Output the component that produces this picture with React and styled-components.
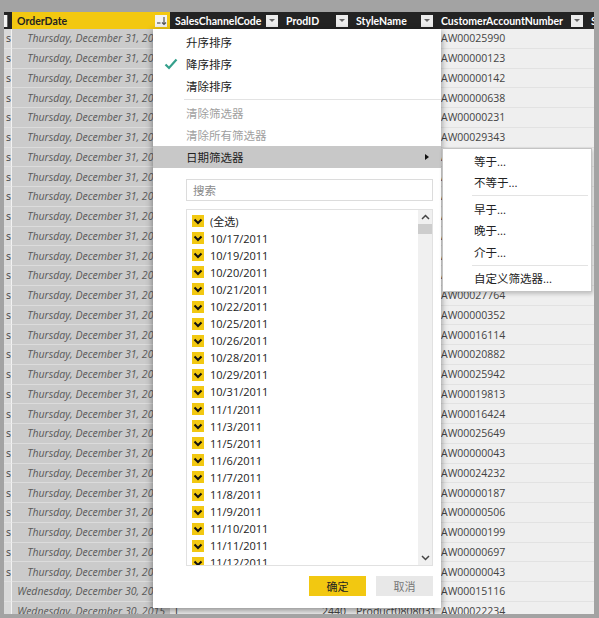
import React from "react";
import styled, { createGlobalStyle } from "styled-components";

const GlobalStyle = createGlobalStyle`
  html, body {
    margin: 0;
    padding: 0;
    background: #a3a3a3;
  }
  body {
    font-family: "Open Sans", "Noto Sans CJK SC", sans-serif;
  }
`;

const COLUMNS = "8px 158px 111px 70px 85px 150px 8px";

const accounts = [
  "AW00025990", "AW00000123", "AW00000142", "AW00000638", "AW00000231",
  "AW00029343", "AW00011982", "AW00000298", "AW00018470", "AW00000562",
  "AW00027014", "AW00000078", "AW00013655", "AW00027764", "AW00000352",
  "AW00016114", "AW00020882", "AW00025942", "AW00019813", "AW00016424",
  "AW00025649", "AW00000043", "AW00024232", "AW00000187", "AW00000506",
  "AW00000199", "AW00000697", "AW00000043", "AW00015116", "AW00022234",
];

const dates = [
  "(全选)", "10/17/2011", "10/19/2011", "10/20/2011", "10/21/2011", "10/22/2011",
  "10/25/2011", "10/26/2011", "10/28/2011", "10/29/2011", "10/31/2011",
  "11/1/2011", "11/3/2011", "11/5/2011", "11/6/2011", "11/7/2011", "11/8/2011",
  "11/9/2011", "11/10/2011", "11/11/2011", "11/12/2011",
];

export default function App() {
  return (
    <>
      <GlobalStyle />
      <Frame>
        <Sheet>
          <HeaderRow>
            <HeadCell>
              <EdgeBox />
            </HeadCell>
            <HeadCell $selected>
              OrderDate
              <DropBtn $light>
                <svg width="11" height="11" viewBox="0 0 11 11">
                  <path d="M1 8 H4.5" stroke="#555" strokeWidth="1.2" />
                  <path d="M8 2 V9.5 M6 7.5 L8 9.5 L10 7.5" stroke="#555" strokeWidth="1.2" fill="none" />
                </svg>
              </DropBtn>
            </HeadCell>
            <HeadCell>
              SalesChannelCode
              <DropBtn><Tri /></DropBtn>
            </HeadCell>
            <HeadCell>
              ProdID
              <DropBtn><Tri /></DropBtn>
            </HeadCell>
            <HeadCell>
              StyleName
              <DropBtn><Tri /></DropBtn>
            </HeadCell>
            <HeadCell>
              CustomerAccountNumber
              <DropBtn><Tri /></DropBtn>
            </HeadCell>
            <HeadCell>S</HeadCell>
          </HeaderRow>

          {accounts.map((acct, i) => {
            const wed = i >= 28;
            return (
              <DataRow key={i}>
                <Cell $edge>{wed ? "" : "s"}</Cell>
                <Cell $selected $align="right" $italic>
                  {wed ? "Wednesday, December 30, 2015" : "Thursday, December 31, 2015"}
                </Cell>
                <Cell>I</Cell>
                <Cell $align="right">2440</Cell>
                <Cell>Product0808031</Cell>
                <Cell>{acct}</Cell>
                <Cell />
              </DataRow>
            );
          })}

          <Panel>
            <MenuItem>
              <IconSlot />
              升序排序
            </MenuItem>
            <MenuItem>
              <IconSlot>
                <svg width="14" height="12" viewBox="0 0 14 12">
                  <path d="M1.5 6.5 L5 10 L12.5 1.5" stroke="#35a08c" strokeWidth="2.2" fill="none" />
                </svg>
              </IconSlot>
              降序排序
            </MenuItem>
            <MenuItem>
              <IconSlot />
              清除排序
            </MenuItem>
            <Separator $indent={31} />
            <MenuItem $disabled>
              <IconSlot />
              清除筛选器
            </MenuItem>
            <MenuItem $disabled>
              <IconSlot />
              清除所有筛选器
            </MenuItem>
            <MenuItem $active>
              <IconSlot />
              日期筛选器
              <SubArrow />
            </MenuItem>

            <SearchBox>搜索</SearchBox>

            <ListBox>
              <ListItems>
                {dates.map((d) => (
                  <ListItem key={d}>
                    <CheckBox>
                      <svg width="12" height="12" viewBox="0 0 12 12">
                        <path d="M2.5 4.5 L6 8 L9.5 4.5" stroke="#111" strokeWidth="2" fill="none" />
                      </svg>
                    </CheckBox>
                    {d}
                  </ListItem>
                ))}
              </ListItems>
              <ScrollBar>
                <ScrollArrow>
                  <svg width="9" height="6" viewBox="0 0 9 6">
                    <path d="M1 5 L4.5 1.5 L8 5" stroke="#444" strokeWidth="1.5" fill="none" />
                  </svg>
                </ScrollArrow>
                <Thumb />
                <ScrollSpace />
                <ScrollArrow>
                  <svg width="9" height="6" viewBox="0 0 9 6">
                    <path d="M1 1 L4.5 4.5 L8 1" stroke="#444" strokeWidth="1.5" fill="none" />
                  </svg>
                </ScrollArrow>
              </ScrollBar>
            </ListBox>

            <ButtonRow>
              <Button $primary>确定</Button>
              <Button>取消</Button>
            </ButtonRow>
          </Panel>

          <SubMenu>
            <SubItem>等于...</SubItem>
            <SubItem>不等于...</SubItem>
            <Separator $indent={29} $right={3} />
            <SubItem>早于...</SubItem>
            <SubItem>晚于...</SubItem>
            <SubItem>介于...</SubItem>
            <Separator $indent={29} $right={3} />
            <SubItem>自定义筛选器...</SubItem>
          </SubMenu>
        </Sheet>
      </Frame>
    </>
  );
}

const Frame = styled.div`
  width: 599px;
  height: 618px;
  box-sizing: border-box;
  padding: 12px 5px 4px 4px;
  background: #a3a3a3;
`;

const Sheet = styled.div`
  position: relative;
  width: 590px;
  height: 602px;
  overflow: hidden;
  background: #efefef;
`;

const HeaderRow = styled.div`
  display: grid;
  grid-template-columns: ${COLUMNS};
  height: 17px;
  background: #232323;
`;

const HeadCell = styled.div`
  display: flex;
  align-items: center;
  justify-content: space-between;
  padding: 0 3px 0 5px;
  overflow: hidden;
  white-space: nowrap;
  font-family: Lato, "Open Sans", sans-serif;
  font-weight: 700;
  font-size: 10.5px;
  color: ${(p) => (p.$selected ? "#222" : "#fff")};
  background: ${(p) => (p.$selected ? "#f2c811" : "transparent")};
  &:first-child {
    padding: 0;
  }
`;

const EdgeBox = styled.div`
  width: 3px;
  height: 12px;
  background: #f4f4f4;
  border-right: 1px solid #666;
`;

const DropBtn = styled.div`
  width: 12px;
  height: 12px;
  flex: none;
  display: flex;
  align-items: center;
  justify-content: center;
  background: ${(p) => (p.$light ? "#f3f3f3" : "#ececec")};
`;

const Tri = styled.div`
  width: 0;
  height: 0;
  border-left: 3px solid transparent;
  border-right: 3px solid transparent;
  border-top: 3px solid #666;
`;

const DataRow = styled.div`
  display: grid;
  grid-template-columns: ${COLUMNS};
  height: 19.75px;
`;

const Cell = styled.div`
  box-sizing: border-box;
  display: flex;
  align-items: center;
  justify-content: ${(p) => (p.$align === "right" ? "flex-end" : "flex-start")};
  padding: ${(p) => (p.$edge ? "0 0 0 2px" : "0 5px")};
  overflow: hidden;
  white-space: nowrap;
  font-size: 10.5px;
  font-style: ${(p) => (p.$italic ? "italic" : "normal")};
  color: ${(p) => (p.$italic ? "#595959" : "#444")};
  background: ${(p) => (p.$selected ? "#cbcbcb" : p.$edge ? "#d9d9d9" : "#efefef")};
  border-bottom: 1px solid ${(p) => (p.$selected ? "#dcdcdc" : "#e2e2e2")};
  border-right: ${(p) => (p.$edge ? "1px solid #f2f2f2" : "none")};
`;

const Panel = styled.div`
  position: absolute;
  left: 149px;
  top: 17px;
  width: 288px;
  height: 579px;
  box-sizing: border-box;
  padding-top: 2px;
  background: #fff;
  box-shadow: 0 2px 7px rgba(0, 0, 0, 0.45);
  display: flex;
  flex-direction: column;
`;

const MenuItem = styled.div`
  display: flex;
  align-items: center;
  height: 22px;
  flex: none;
  padding-right: 12px;
  font-size: 11.5px;
  color: ${(p) => (p.$disabled ? "#a0a0a0" : "#222")};
  background: ${(p) => (p.$active ? "#c8c8c8" : "transparent")};
`;

const IconSlot = styled.div`
  width: 33px;
  flex: none;
  display: flex;
  align-items: center;
  padding-left: 11px;
  box-sizing: border-box;
`;

const SubArrow = styled.div`
  margin-left: auto;
  width: 0;
  height: 0;
  border-top: 3.5px solid transparent;
  border-bottom: 3.5px solid transparent;
  border-left: 4px solid #111;
`;

const Separator = styled.div`
  height: 1px;
  flex: none;
  margin: 2px ${(p) => p.$right || 0}px 2px ${(p) => p.$indent}px;
  background: #e3e3e3;
`;

const SearchBox = styled.div`
  flex: none;
  height: 22px;
  box-sizing: border-box;
  margin: 11px 8px 0 33px;
  padding-left: 6px;
  display: flex;
  align-items: center;
  border: 1px solid #dcdcdc;
  font-size: 11.5px;
  color: #8a8a8a;
`;

const ListBox = styled.div`
  flex: none;
  height: 357px;
  box-sizing: border-box;
  margin: 8px 8px 0 33px;
  border: 1px solid #e1e1e1;
  display: flex;
  overflow: hidden;
`;

const ListItems = styled.div`
  flex: 1;
  padding-top: 2.5px;
  overflow: hidden;
`;

const ListItem = styled.div`
  height: 17.1px;
  display: flex;
  align-items: center;
  padding-left: 5px;
  font-size: 11px;
  color: #222;
  white-space: nowrap;
`;

const CheckBox = styled.div`
  width: 12px;
  height: 12px;
  flex: none;
  margin-right: 6px;
  background: #f2c811;
  display: flex;
  align-items: center;
  justify-content: center;
`;

const ScrollBar = styled.div`
  width: 14px;
  flex: none;
  background: #f0f0f0;
  display: flex;
  flex-direction: column;
  align-items: center;
`;

const ScrollArrow = styled.div`
  height: 14px;
  flex: none;
  display: flex;
  align-items: center;
  justify-content: center;
`;

const Thumb = styled.div`
  width: 14px;
  height: 10px;
  flex: none;
  background: #cdcdcd;
`;

const ScrollSpace = styled.div`
  flex: 1;
`;

const ButtonRow = styled.div`
  display: flex;
  justify-content: flex-end;
  gap: 10px;
  margin: 10px 8px 0 0;
`;

const Button = styled.div`
  width: 57px;
  height: 20px;
  display: flex;
  align-items: center;
  justify-content: center;
  font-size: 11px;
  color: ${(p) => (p.$primary ? "#222" : "#777")};
  background: ${(p) => (p.$primary ? "#f2c811" : "#e8e8e8")};
`;

const SubMenu = styled.div`
  position: absolute;
  left: 438px;
  top: 136px;
  width: 150px;
  box-sizing: border-box;
  padding: 1px 0 2px;
  background: #fff;
  border: 1px solid #c4c4c4;
  box-shadow: 1px 2px 4px rgba(0, 0, 0, 0.2);
`;

const SubItem = styled.div`
  height: 21.5px;
  display: flex;
  align-items: center;
  padding-left: 31px;
  font-size: 11.5px;
  color: #222;
`;
